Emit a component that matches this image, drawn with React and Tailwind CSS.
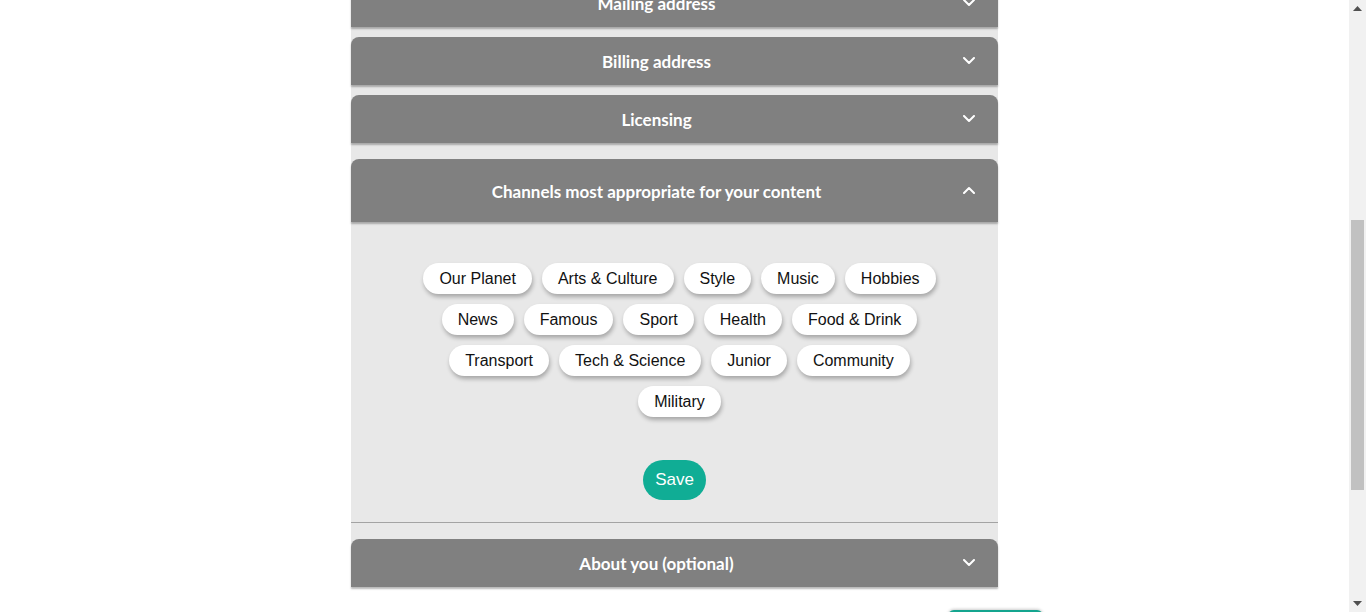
const CHANNELS = [
  "Our Planet",
  "Arts & Culture",
  "Style",
  "Music",
  "Hobbies",
  "News",
  "Famous",
  "Sport",
  "Health",
  "Food & Drink",
  "Transport",
  "Tech & Science",
  "Junior",
  "Community",
  "Military",
];

function Chevron({ up }) {
  return (
    <svg width="12" height="8" viewBox="0 0 12 8" className="shrink-0">
      <polyline
        points={up ? "1,7 6,2 11,7" : "1,1 6,6 11,1"}
        fill="none"
        stroke="white"
        strokeWidth="2"
        strokeLinecap="round"
        strokeLinejoin="round"
      />
    </svg>
  );
}

function SectionHeader({ title, open, className = "" }) {
  return (
    <div
      className={
        "flex items-center rounded-t-lg bg-[#808080] text-[17px] font-bold text-white shadow-[0_2px_2px_rgba(0,0,0,0.28)] " +
        (open ? "h-[63px] " : "h-[48px] ") +
        className
      }
      style={{ fontFamily: "Lato, 'Open Sans', sans-serif" }}
    >
      <div className="w-[611px] pt-[2px] text-center">{title}</div>
      <div className={"flex pl-[1px] " + (open ? "-mt-[2px]" : "")}>
        <Chevron up={open} />
      </div>
    </div>
  );
}

function Scrollbar() {
  return (
    <div className="flex w-[17px] shrink-0 flex-col items-center bg-[#f1f1f1]">
      <div className="flex h-[17px] w-full items-center justify-center">
        <svg width="9" height="5" viewBox="0 0 9 5">
          <polygon points="0,5 4.5,0 9,5" fill="#505050" />
        </svg>
      </div>
      <div className="mt-[203px] h-[270px] w-[13px] bg-[#c1c1c1]" />
      <div className="flex-1" />
      <div className="flex h-[17px] w-full items-center justify-center">
        <svg width="9" height="5" viewBox="0 0 9 5">
          <polygon points="0,0 4.5,5 9,0" fill="#505050" />
        </svg>
      </div>
    </div>
  );
}

export default function App() {
  return (
    <div className="flex h-[612px] w-full overflow-hidden bg-white">
      <div className="flex min-w-0 flex-1 flex-col items-center">
        <div className="-mt-[21px] flex w-[647px] flex-col bg-[#e8e8e8]">
          <SectionHeader title="Mailing address" className="mb-[10px]" />
          <SectionHeader title="Billing address" className="mb-[10px]" />
          <SectionHeader title="Licensing" className="mb-[16px]" />
          <SectionHeader title="Channels most appropriate for your content" open />
          <div className="mb-[16px] flex flex-col items-center border-b border-[#a3a3a3] pb-[22px] pt-[41px]">
            <div
              className="flex w-[540px] flex-wrap justify-center"
              style={{ fontFamily: "'Liberation Sans', Arial, sans-serif" }}
            >
              {CHANNELS.map((c) => (
                <div
                  key={c}
                  className="mb-[10px] ml-[10px] flex h-[31px] items-center rounded-full bg-white px-4 pt-px text-[16px] text-[#111] shadow-[1px_3px_4px_rgba(0,0,0,0.28)]"
                >
                  {c}
                </div>
              ))}
            </div>
            <button
              type="button"
              className="mt-[33px] flex h-10 items-center rounded-full bg-[#10ad95] px-[12.5px] text-[17px] text-white"
              style={{ fontFamily: "'Liberation Sans', Arial, sans-serif" }}
            >
              Save
            </button>
          </div>
          <SectionHeader title="About you (optional)" />
        </div>
        <div className="flex w-full pl-[948px] pt-[23px]">
          <div className="h-4 w-[95px] shrink-0 rounded-t-md border-t-2 border-[#14a58f] bg-white shadow-[0_-1px_3px_rgba(0,0,0,0.2)]" />
        </div>
      </div>
      <Scrollbar />
    </div>
  );
}
